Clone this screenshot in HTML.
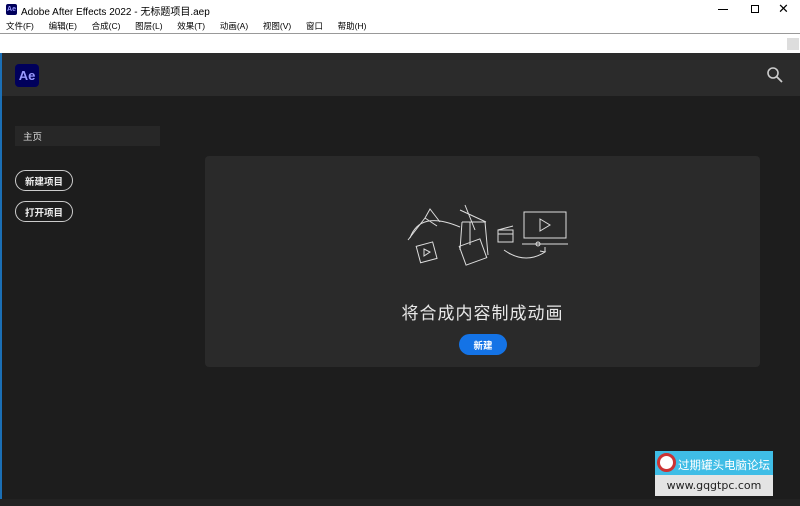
<!DOCTYPE html>
<html><head><meta charset="utf-8"><style>
*{margin:0;padding:0;box-sizing:border-box}
body{width:800px;height:506px;overflow:hidden;background:#1d1d1d;font-family:"Liberation Sans","Noto Sans CJK SC",sans-serif;position:relative}
.abs{position:absolute}
.btn{display:flex;align-items:center;justify-content:center}
</style></head><body>
<div class="abs" style="left:0;top:0;width:800px;height:33px;background:#fff"></div>
<div class="abs" style="left:6px;top:4px;width:11px;height:11px;background:#00005b;border-radius:2px;color:#99f;font-size:7px;font-weight:bold;text-align:center;line-height:11px">Ae</div>
<div class="abs" style="left:21px;top:3px;font-size:10px;color:#000">Adobe After Effects 2022 - 无标题项目.aep</div>
<div class="abs" style="left:718px;top:9px;width:10px;height:1px;background:#000"></div>
<div class="abs" style="left:751px;top:5px;width:8px;height:8px;border:1px solid #000"></div>
<div class="abs" style="left:778px;top:1px;font-size:13px;color:#000">✕</div>
<div class="abs" style="left:6px;top:20px;font-size:8.5px;color:#000;word-spacing:5px;white-space:pre">文件(F)  编辑(E)  合成(C)  图层(L)  效果(T)  动画(A)  视图(V)  窗口  帮助(H)</div>
<div class="abs" style="left:0;top:33px;width:800px;height:1px;background:#999"></div>
<div class="abs" style="left:0;top:34px;width:800px;height:19px;background:#fff"></div>
<div class="abs" style="left:787px;top:38px;width:12px;height:12px;background:#ddd"></div>
<div class="abs" style="left:0;top:53px;width:800px;height:43px;background:#2b2b2b"></div>
<div class="abs" style="left:0;top:53px;width:2px;height:453px;background:#1b6fb5"></div>
<div class="abs" style="left:15px;top:64px;width:24px;height:23px;background:#00005b;border-radius:4px;color:#9999ff;font-size:13px;font-weight:bold;text-align:center;line-height:23px">Ae</div>
<svg class="abs" style="left:766px;top:66px" width="18" height="18"><circle cx="7" cy="7" r="5" fill="none" stroke="#ccc" stroke-width="1.6"/><line x1="11" y1="11" x2="16" y2="16" stroke="#ccc" stroke-width="1.8"/></svg>
<div class="abs btn" style="left:15px;top:126px;width:145px;height:20px;background:#272727;color:#ddd;font-size:9.5px;justify-content:flex-start;padding-left:8px">主页</div>
<div class="abs btn" style="left:15px;top:170px;width:58px;height:21px;border:1.5px solid #ccc;border-radius:11px;color:#eee;font-size:9.5px;font-weight:bold">新建项目</div>
<div class="abs btn" style="left:15px;top:201px;width:58px;height:21px;border:1.5px solid #ccc;border-radius:11px;color:#eee;font-size:9.5px;font-weight:bold">打开项目</div>
<div class="abs" style="left:205px;top:156px;width:555px;height:211px;background:#2a2a2a;border-radius:4px"></div>
<svg class="abs" style="left:400px;top:200px" width="175" height="70" fill="none" stroke="#ddd" stroke-width="1">
<path d="M8 40 L25 18 L37 26 L25 18 Z M25 18 L30 9 L40 22"/><path d="M10 38 Q20 10 60 27"/>
<rect x="18" y="44" width="17" height="17" transform="rotate(-15 26 52)"/><path d="M24 49 L30 52 L24 56 Z"/>
<path d="M60 10 L86 22 M65 5 L75 30 M62 22 L85 22 M62 22 L60 50 M85 22 L88 55 M70 22 L70 45"/>
<rect x="62" y="42" width="22" height="20" transform="rotate(-20 73 52)"/>
<rect x="98" y="30" width="15" height="12"/><path d="M98 30 L113 26 M98 34 L113 34"/>
<path d="M104 50 Q125 65 145 52 L140 51 M145 52 L145 47"/>
<rect x="124" y="12" width="42" height="26"/><path d="M140 19 L150 25 L140 31 Z"/><path d="M122 44 L168 44"/><circle cx="138" cy="44" r="2"/>
</svg>
<div class="abs" style="left:205px;top:299px;width:555px;text-align:center;color:#e8e8e8;font-size:17px;letter-spacing:1px">将合成内容制成动画</div>
<div class="abs btn" style="left:459px;top:334px;width:48px;height:21px;background:#1473e6;border-radius:11px;color:#fff;font-size:9.5px;font-weight:bold">新建</div>
<div class="abs" style="left:0;top:499px;width:800px;height:7px;background:#222"></div>
<div class="abs" style="left:655px;top:451px;width:118px;height:24px;background:#3fbde6"></div>
<div class="abs" style="left:657px;top:453px;width:19px;height:19px;border-radius:50%;border:3px solid #c33;background:#fff"></div>
<div class="abs" style="left:678px;top:457px;font-size:11.5px;color:#fff;white-space:nowrap">过期罐头电脑论坛</div>
<div class="abs" style="left:655px;top:475px;width:118px;height:21px;background:#e4e4e4;color:#222;font-size:11px;text-align:center;line-height:21px;font-family:'DejaVu Sans',sans-serif">www.gqgtpc.com</div>
</body></html>
